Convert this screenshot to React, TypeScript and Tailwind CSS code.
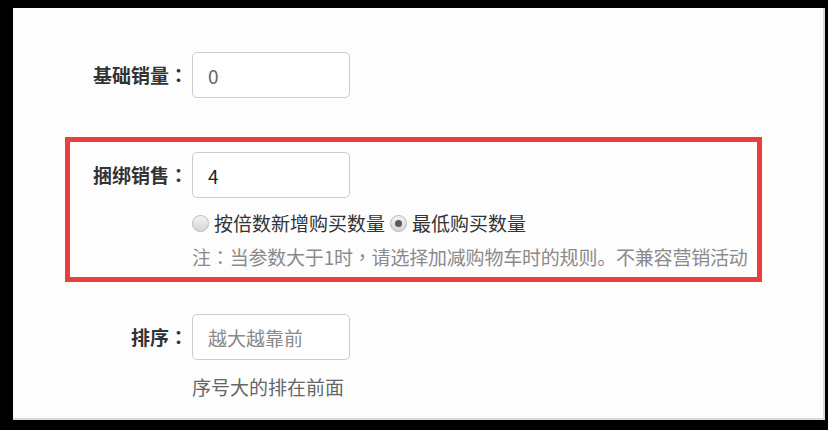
import React from 'react';

const font = { fontFamily: '"Noto Sans CJK SC", "Microsoft YaHei", sans-serif' };

// centred full-width punctuation, like the reference's colons and commas
const P: React.FC<{ children: React.ReactNode }> = ({ children }) => (
  <span style={{ fontFamily: '"Noto Sans CJK TC", sans-serif' }}>{children}</span>
);

const Radio: React.FC<{ checked?: boolean; label: string }> = ({ checked, label }) => (
  <label className="flex items-center">
    <span className="flex h-[17px] w-[17px] items-center justify-center rounded-full border border-[#b8b8b8] bg-gradient-to-b from-[#f4f4f4] to-[#d6d6d6]">
      {checked && <span className="h-[7px] w-[7px] rounded-full bg-[#5a5a5a]" />}
    </span>
    <span className="ml-[5px] text-[#333]">{label}</span>
  </label>
);

const App: React.FC = () => {
  return (
    <div className="h-[430px] w-[828px] overflow-hidden bg-black" style={font}>
      <div className="ml-[13px] mt-[8px] h-[412px] w-[812px] border-b-2 border-r-2 border-[#d9d9d9] bg-[#fdfdfe] text-[19px]">
        {/* 基础销量 */}
        <div className="ml-[70px] flex items-center pt-[44px]">
          <span className="w-[105px] shrink-0 whitespace-nowrap text-right font-bold text-[#333]">
            基础销量<P>：</P>
          </span>
          <input
            readOnly
            value="0"
            className="ml-[4px] h-[46px] w-[158px] rounded-[5px] border border-[#ccc] bg-white px-[15px] text-[19px] text-[#666] outline-none"
          />
        </div>

        {/* 捆绑销售 */}
        <div className="ml-[52px] mt-[39px] h-[145px] w-[697px] border-[5px] border-[#e8403f] pt-[10px]">
          <div className="ml-[13px] flex items-center">
            <span className="w-[105px] shrink-0 whitespace-nowrap text-right font-bold text-[#333]">
              捆绑销售<P>：</P>
            </span>
            <input
              readOnly
              value="4"
              className="ml-[4px] h-[46px] w-[158px] rounded-[5px] border border-[#ccc] bg-white px-[15px] text-[19px] text-[#222] outline-none"
            />
          </div>
          <div className="ml-[122px] mt-[13px] flex h-[24px] items-center gap-[5px] leading-[24px]">
            <Radio label="按倍数新增购买数量" />
            <Radio checked label="最低购买数量" />
          </div>
          <p className="ml-[122px] mt-[10px] whitespace-nowrap leading-[24px] tracking-[-0.2px] text-[#8a8a8a]">
            注<P>：</P>当参数大于1时<P>，</P>请选择加减购物车时的规则。不兼容营销活动
          </p>
        </div>

        {/* 排序 */}
        <div className="ml-[70px] mt-[32px] flex items-center">
          <span className="w-[105px] shrink-0 whitespace-nowrap text-right font-bold text-[#333]">
            排序<P>：</P>
          </span>
          <input
            readOnly
            placeholder="越大越靠前"
            className="ml-[4px] h-[46px] w-[158px] rounded-[5px] border border-[#ccc] bg-white px-[15px] text-[19px] text-[#333] outline-none placeholder:text-[#8a8a8a]"
          />
        </div>
        <p className="ml-[179px] mt-[15px] leading-[24px] text-[#666]">序号大的排在前面</p>
      </div>
    </div>
  );
};

export default App;
